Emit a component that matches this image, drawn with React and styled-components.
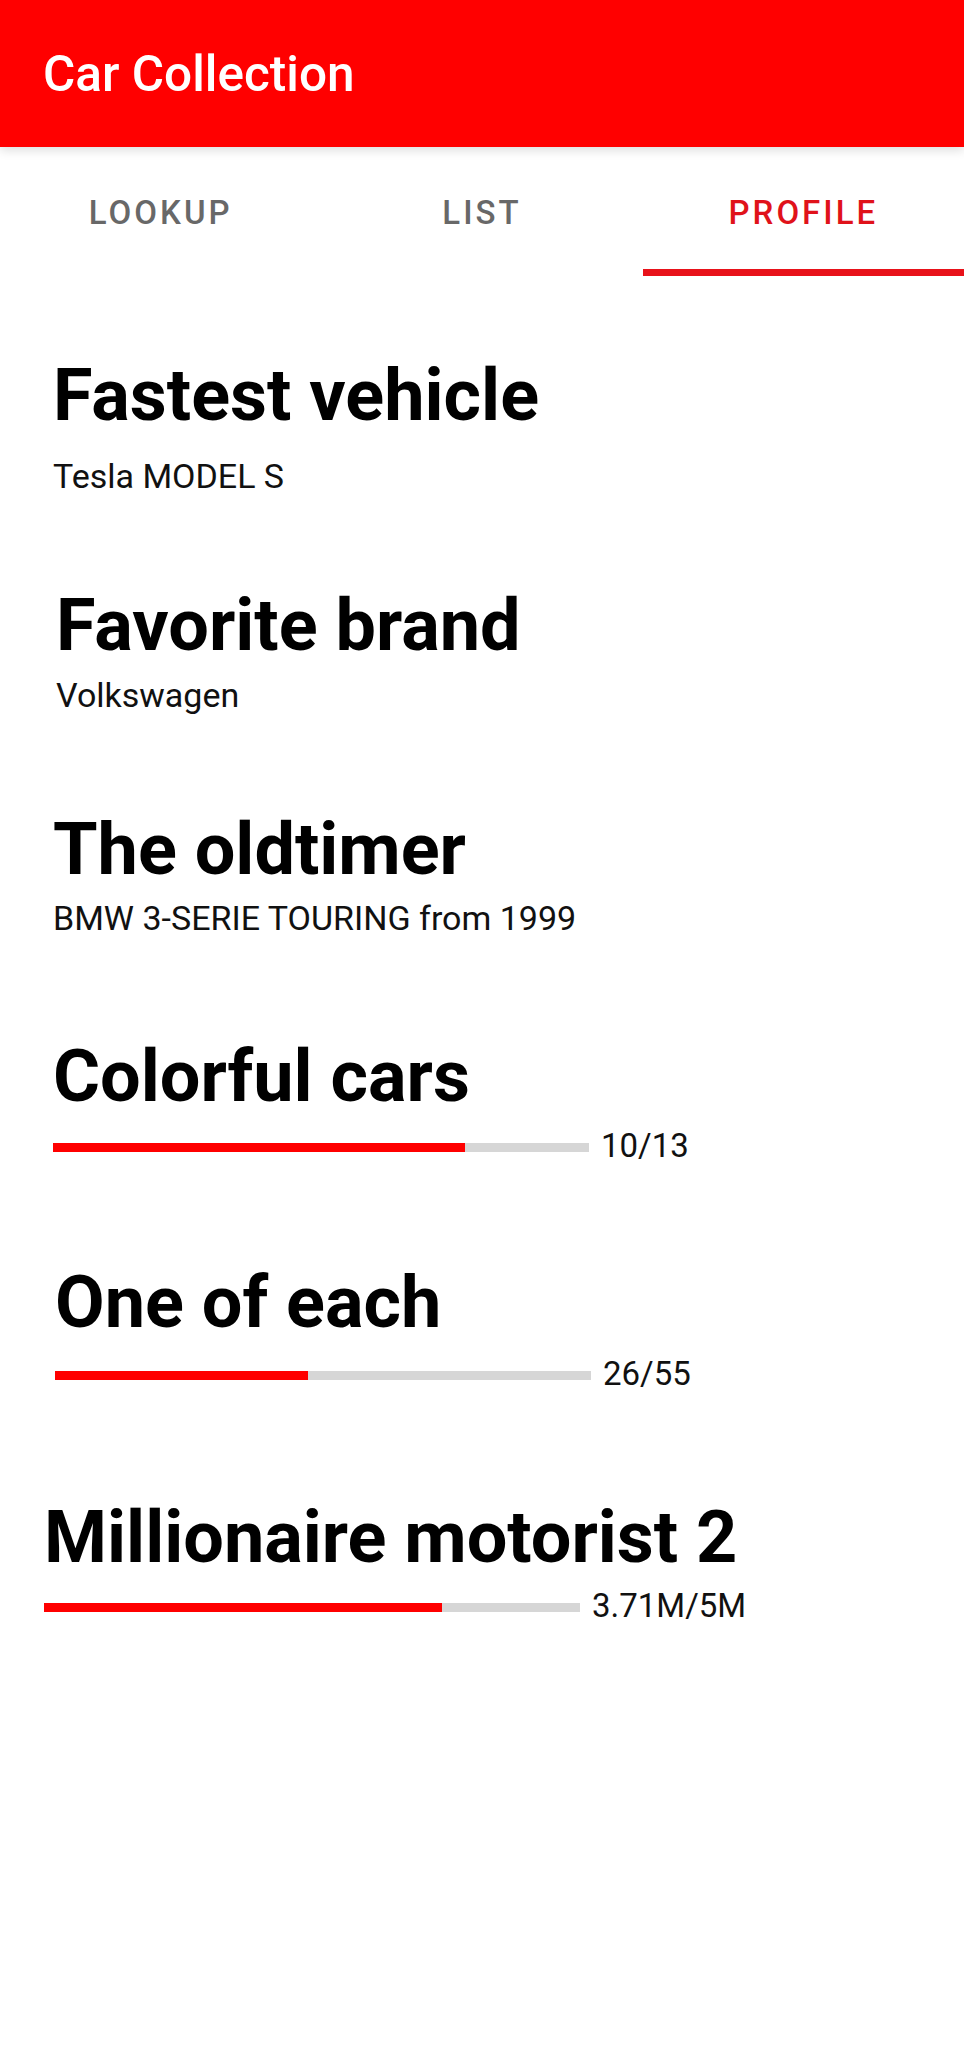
import React from 'react';
import styled, { createGlobalStyle } from 'styled-components';

const GlobalStyle = createGlobalStyle`
  html, body {
    margin: 0;
    padding: 0;
    background: #ffffff;
  }
  body {
    font-family: Roboto, 'Noto Sans', 'Liberation Sans', sans-serif;
    color: #000;
  }
`;

const Page = styled.div`
  width: 964px;
  min-height: 2048px;
  background: #fff;
`;

const AppBar = styled.header`
  position: relative;
  z-index: 2;
  height: 147px;
  display: flex;
  align-items: center;
  padding-left: 43px;
  background: #ff0000;
  box-shadow: 0 3px 10px rgba(0, 0, 0, 0.14);
`;

const AppTitle = styled.h1`
  margin: 0;
  font-size: 49.5px;
  font-weight: 500;
  color: #fff;
`;

const TabBar = styled.nav`
  display: grid;
  grid-template-columns: repeat(3, 1fr);
  height: 129px;
`;

const Tab = styled.div`
  display: flex;
  align-items: center;
  justify-content: center;
  padding-top: 9px;
  border-bottom: 7px solid ${(p) => (p.$active ? '#e8121a' : 'transparent')};
  font-size: 33px;
  font-weight: 500;
  letter-spacing: 3px;
  text-transform: uppercase;
  color: ${(p) => (p.$active ? '#e0121a' : '#686868')};
`;

const Content = styled.main`
  display: flex;
  flex-direction: column;
`;

const Stat = styled.section`
  display: flex;
  flex-direction: column;
  align-items: flex-start;
  margin-top: ${(p) => p.$top}px;
  padding-left: ${(p) => p.$indent}px;
`;

const Heading = styled.h2`
  margin: 0;
  font-size: 72px;
  line-height: 84px;
  font-weight: 700;
  color: #000;
`;

const Detail = styled.p`
  margin: ${(p) => p.$gap}px 0 0;
  font-size: 34px;
  line-height: 39px;
  color: #111;
`;

const ProgressRow = styled.div`
  display: flex;
  align-items: flex-start;
  margin-top: ${(p) => p.$gap}px;
`;

const Track = styled.div`
  width: 536px;
  height: 9px;
  margin-top: 17px;
  background: #d6d6d6;
`;

const Fill = styled.div`
  height: 100%;
  background: #ff0000;
`;

const Count = styled.span`
  margin-left: 12px;
  font-size: 33px;
  line-height: 39px;
  color: #111;
`;

const tabs = ['Lookup', 'List', 'Profile'];

const stats = [
  { title: 'Fastest vehicle', detail: 'Tesla MODEL S', top: 78, indent: 53, gap: 19 },
  { title: 'Favorite brand', detail: 'Volkswagen', top: 88, indent: 56, gap: 8 },
  { title: 'The oldtimer', detail: 'BMW 3-SERIE TOURING from 1999', top: 93, indent: 53, gap: 7 },
  { title: 'Colorful cars', value: 10, max: 13, label: '10/13', top: 97, indent: 53, gap: 7 },
  { title: 'One of each', value: 26, max: 55, label: '26/55', top: 96, indent: 55, gap: 9 },
  { title: 'Millionaire motorist 2', value: 3.71, max: 5, label: '3.71M/5M', top: 103, indent: 44, gap: 6 },
];

const App = () => (
  <>
    <GlobalStyle />
    <Page>
      <AppBar>
        <AppTitle>Car Collection</AppTitle>
      </AppBar>
      <TabBar>
        {tabs.map((t) => (
          <Tab key={t} $active={t === 'Profile'}>
            {t}
          </Tab>
        ))}
      </TabBar>
      <Content>
        {stats.map((s) => (
          <Stat key={s.title} $top={s.top} $indent={s.indent}>
            <Heading>{s.title}</Heading>
            {s.detail ? (
              <Detail $gap={s.gap}>{s.detail}</Detail>
            ) : (
              <ProgressRow $gap={s.gap}>
                <Track>
                  <Fill style={{ width: `${(s.value / s.max) * 100}%` }} />
                </Track>
                <Count>{s.label}</Count>
              </ProgressRow>
            )}
          </Stat>
        ))}
      </Content>
    </Page>
  </>
);

export default App;
